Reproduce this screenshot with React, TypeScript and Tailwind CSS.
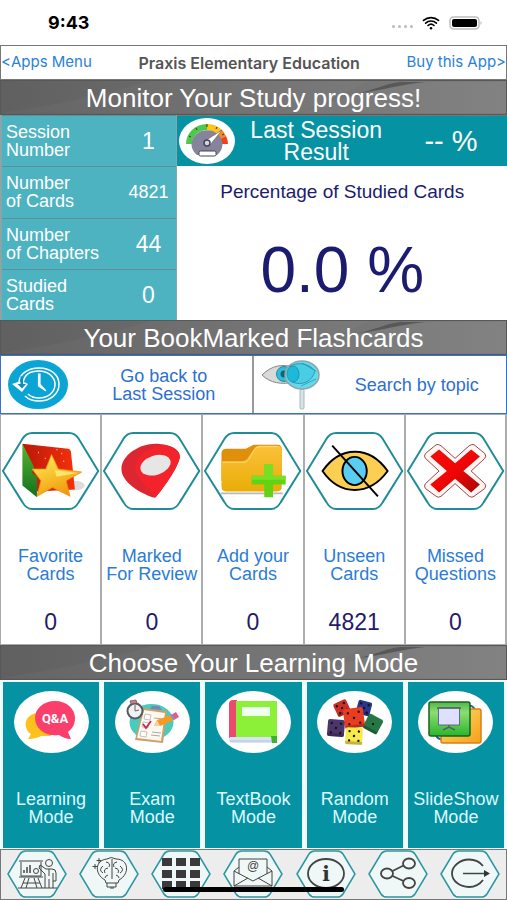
import type { ReactNode } from "react";
import { IoWifi } from "react-icons/io5";

const stats = [
  { label: ["Session", "Number"], value: "1" },
  { label: ["Number", "of Cards"], value: "4821" },
  { label: ["Number", "of Chapters"], value: "44" },
  { label: ["Studied", "Cards"], value: "0" },
];

const SectionTitle = ({ children }: { children: ReactNode }) => (
  <div className="relative flex h-[35px] items-center justify-center border border-[#585858] bg-linear-to-r from-[#606060] via-[#707070] to-[#7d7d7d]">
    {/* brushed light streaks */}
    <svg
      className="absolute inset-0 h-full w-full"
      viewBox="0 0 507 35"
      preserveAspectRatio="none"
      aria-hidden="true"
    >
      <path d="M0 34C50 26 100 16 150 0H370L300 34Z" fill="#fff" opacity=".03" />
      <path d="M300 34C330 24 345 14 425 1H507V34Z" fill="#fff" opacity=".04" />
      <path d="M358 13C380 8 390 1 404 1H426C402 3 384 10 358 13Z" fill="#333" opacity=".45" />
    </svg>
    <h2 className="relative text-[26px] leading-8 text-white">{children}</h2>
  </div>
);

/* ---------- icons ---------- */

const GaugeIcon = () => (
  <svg className="h-[46px] w-14 shrink-0" viewBox="0 0 56 46" aria-hidden="true">
    <ellipse cx="28" cy="23" rx="28" ry="23" fill="#fff" />
    <path d="M7 26A21 20 0 0 1 28 6V12A15 14 0 0 0 13 26Z" fill="#4cc94c" />
    <path d="M28 6A21 20 0 0 1 42 11L37 16A15 14 0 0 0 28 12Z" fill="#fbc31c" />
    <path d="M42 11A21 20 0 0 1 47 18L41 21L37 16Z" fill="#f58a1f" />
    <path d="M47 18A21 20 0 0 1 49 26H43L41 21Z" fill="#f0421c" />
    <path d="M10 18l2 1M17 10l1 2M28 6v3M38 9l-1 2M45 16l-2 1" stroke="#333" />
    <path d="M18 37A15.500 14 0 1 1 38 37Z" fill="#85849a" />
    <path d="M26 23L43 12L31 27Z" fill="#fff" stroke="#55546a" strokeWidth=".5" />
    <circle cx="28" cy="25" r="3" fill="#d6d6df" stroke="#45445a" strokeWidth="1.500" />
    <rect x="20" y="33" width="17" height="5" rx="1.500" fill="#fff" stroke="#45445a" />
  </svg>
);

const HistoryIcon = () => (
  <svg className="h-[49px] w-[60px] shrink-0" viewBox="0 0 60 49" aria-hidden="true">
    <ellipse cx="30" cy="24.500" rx="30" ry="24.500" fill="#0ba5d5" />
    <path d="M11 23C11 14 20 8 31 8C43 8 51 15 51 24.500C51 34 42 41 31 41C25 41 20 39 17 36" fill="none" stroke="#fff" strokeWidth="1.500" />
    <path d="M15 23C16 15 22 11 31 11C40 11 47 17 47 24.500C47 32 40 38 31 38C27 38 23 37 20 34" fill="none" stroke="#fff" strokeWidth="1.500" />
    <path d="M4 24L10 22H16L20 24L14 32Z" fill="#fff" />
    <path d="M12.500 16L15 17V24H18L14 28.500L9.500 24H12.500Z" fill="#0b8fbb" />
    <path d="M30.500 14V26L38 31L32 24.500V14Z" fill="#fff" stroke="#fff" strokeWidth="1.200" />
  </svg>
);

const EyeSearchIcon = () => (
  <svg className="h-[50px] w-[58px] shrink-0" viewBox="0 0 58 50" aria-hidden="true">
    <path d="M0 15C10 5 20 4 32 7V22C20 25 8 23 0 15Z" fill="#d9d9d9" stroke="#858585" />
    <circle cx="22" cy="14" r="7.500" fill="#28c0dc" stroke="#2389a3" />
    <circle cx="22" cy="14" r="3.500" fill="#166276" />
    <rect x="38" y="29" width="4" height="20" rx="1.500" fill="#d7e4e5" stroke="#a5b9ba" />
    <ellipse cx="40" cy="15" rx="17" ry="14" fill="#64d8ea" stroke="#8fa5a8" strokeWidth="1.500" />
    <path d="M27 7C34 2 46 2 53 11C50 22 40 26 30 22C39 20 39 10 29 7" fill="#47cee4" stroke="#238fa3" strokeWidth=".8" />
    <ellipse cx="31" cy="14" rx="6" ry="8" fill="#1cb9da" stroke="#238fa3" strokeWidth=".8" />
    <path d="M40 3L54 11M39 26L54 19" stroke="#238fa3" strokeWidth=".7" />
  </svg>
);

const FavoriteArt = () => (
  <>
    <defs>
      <linearGradient id="star" x1="0" y1="0" x2=".5" y2="1">
        <stop stopColor="#fff35c" />
        <stop offset="1" stopColor="#f29a0c" />
      </linearGradient>
      <linearGradient id="book" x1="0" y1="0" x2="1" y2="0">
        <stop stopColor="#b91808" />
        <stop offset="1" stopColor="#f5300c" />
      </linearGradient>
      <linearGradient id="leaf" x1="0" y1="0" x2="0" y2="1">
        <stop stopColor="#58b432" />
        <stop offset="1" stopColor="#11701c" />
      </linearGradient>
    </defs>
    <ellipse cx="76" cy="55" rx="10" ry="5" fill="#dcdcdc" />
    <path d="M22 12L69 17Q72 18 72 21L76 59L37 61Z" fill="url(#book)" />
    <path d="M22 12L34 36L32 42L37 46V67L22 55Z" fill="url(#leaf)" />
    <path d="M52 23L59 38L83 41L67 50L71 66L53 57L37 66L41 50L32 38L46 38Z" fill="url(#star)" stroke="#e99212" strokeWidth=".8" />
    <path d="M52 25L55 39L79 42L57 46Z" fill="#fff58a" opacity=".7" />
    <path d="M38 21h1M45 27h1M62 22h1M64 30h1M57 18h1" stroke="#ffb49a" strokeWidth="1.500" />
  </>
);

const MarkerArt = () => (
  <>
    <path d="M20 38C20 24 38 12 55 12C66 12 80 16 80 25C80 33 66 54 56 66Q55 68 52 67C40 63 20 52 20 38Z" fill="#dc2733" />
    <path d="M35 41C31 30 42 17 63 13C73 15 80 19 80 25C80 33 66 54 56 66Q55 68 54 67C49 58 38 50 35 41Z" fill="#f3222b" />
    <ellipse cx="55" cy="34" rx="16" ry="10" transform="rotate(-18 55 34)" fill="#e6e6e6" />
  </>
);

const FolderArt = () => (
  <>
    <defs>
      <linearGradient id="folder" x1="0" y1="0" x2="0" y2="1">
        <stop stopColor="#fbc13a" />
        <stop offset="1" stopColor="#e9ad08" />
      </linearGradient>
    </defs>
    <path d="M18 63H82" stroke="#b9b9b9" strokeWidth="2" />
    <path d="M19 22Q19 17 24 17H44L52 13H77Q81 13 81 18V50H19Z" fill="#e08f0a" />
    <path d="M19 30H41Q44 30 46 27L52 18Q54 14 58 14H77Q81 14 81 18V56Q81 61 76 61H24Q19 61 19 56Z" fill="url(#folder)" />
    <path d="M20 31H42Q45 31 47 28L53 18Q55 15 58 15H77" fill="none" stroke="#ffd978" />
    <path d="M63 33h9v12h13v9h-13v13h-9v-13h-13v-9h13z" fill="#61d313" />
    <path d="M63 33h9v12h13v4h-35v-4h13z" fill="#83e42c" opacity=".7" />
  </>
);

const UnseenArt = () => (
  <>
    <path d="M18 40C36 14 66 13 85 40C66 66 36 66 18 40Z" fill="#fccf52" stroke="#000" strokeWidth="2" strokeLinejoin="round" />
    <ellipse cx="51" cy="40" rx="12.500" ry="14.500" fill="#59cdf2" stroke="#000" strokeWidth="2" />
    <path d="M28 14L75 66" stroke="#000" strokeWidth="2" />
  </>
);

const MissedArt = () => (
  <>
    <defs>
      <linearGradient id="cross" x1="0" y1="0" x2="1" y2="1">
        <stop stopColor="#f20d0d" />
        <stop offset=".5" stopColor="#f00606" />
        <stop offset="1" stopColor="#a80707" />
      </linearGradient>
    </defs>
    <path d="M31 13Q33 12 36 14L50.500 27L65 14Q68 12 70 13L81 22Q83 25 81 27L67 40L81 53Q83 55 81 58L70 66Q68 68 65 66L50.500 53L36 66Q33 68 31 66L20 58Q18 55 20 53L34 40L20 27Q18 25 20 22Z" fill="#fff6f3" stroke="#964242" />
    <path d="M34 18L50.500 32L67 18L76 25L59 40L76 54L67 62L50.500 48L34 62L25 54L42 40L25 25Z" fill="url(#cross)" />
  </>
);

const QaArt = () => (
  <>
    <path d="M29 22C17 20 10 28 12 36C13 40 15 42 17 43L14 48C19 48 24 47 27 45H37Z" fill="#fcc11c" />
    <path d="M41 10C53 10 61 18 61 27C61 34 58 38 54 41L57 48C52 48 48 46 45 44C32 46 21 38 21 27C21 18 29 10 41 10Z" fill="#fb3f6c" />
    <text x="41" y="32" textAnchor="middle" fill="#fff" className="font-[Roboto] text-[13px] font-bold">
      Q&amp;A
    </text>
  </>
);

const ExamArt = () => (
  <>
    <ellipse cx="36.500" cy="31" rx="22" ry="18" fill="#4bcbbb" />
    <path d="M28 17L52 20L48 52L20 49Z" fill="#c8a06a" />
    <path d="M29 19L50 22L46 50L22 47Z" fill="#fff8ee" />
    <path d="M35 18l2-3h7l3 4z" fill="#7686ba" />
    <path d="M30 23l6 1-1 5-6-1zM26 40l6 1-1 5-6-1zM28 31l6 1-1 5-6-1z" fill="#fff" stroke="#b3b3b3" strokeWidth=".8" />
    <path d="M28 33l3 4 5-7" fill="none" stroke="#cf2456" strokeWidth="1.800" />
    <path d="M37 41l9 1M36 44l9 1M39 27l8 1" stroke="#aaa" />
    <path d="M39 35l3-6 14-5 3 5-14 6z" fill="#f79a20" />
    <path d="M39 35l3-6 3 6z" fill="#f4d2a5" />
    <path d="M56 24l5-3 3 5-5 3z" fill="#e35c8b" />
    <path d="M55 24l2-1 3 5-2 1z" fill="#8a8fc4" />
    <circle cx="20" cy="20" r="7.500" fill="#f1f1f1" stroke="#555962" strokeWidth="2" />
    <path d="M20 14v6l4-1" fill="none" stroke="#666" />
    <path d="M15 10l6-1 1 3-6 1z" fill="#c7818d" stroke="#77575d" strokeWidth=".8" />
  </>
);

const BookArt = () => (
  <>
    <path d="M13 13Q13 9 17 9H21V47H13Z" fill="#ed496c" />
    <path d="M20 10H61V46H20Z" fill="#8bf037" />
    <path d="M26 16H54V25H26Z" fill="#effff0" />
    <path d="M14 46H57V52H16Q13 52 13 49Z" fill="#d9e4f3" />
    <path d="M14 50H57" stroke="#abc2e2" />
    <path d="M55 45H61V52H56Z" fill="#3eb22f" />
  </>
);

type DieProps = { x: number; y: number; size: number; turn: number; color: string; dot?: string; single?: boolean };

const Die = ({ x, y, size, turn, color, dot = "#1a1111", single }: DieProps) => {
  const h = size / 2;
  return (
    <g transform={`translate(${x} ${y}) rotate(${turn})`}>
      <rect x={-h} y={-h} width={size} height={size} rx="2" fill={color} />
      <path d={`M${-h} ${h - 3}H${h}V${h}H${-h}Z`} fill="#000" opacity=".22" />
      <circle r="1.200" fill={dot} />
      {!single &&
        [-1, 1].map((a) =>
          [-1, 1].map((b) => <circle key={`${a}${b}`} cx={a * h * 0.55} cy={b * h * 0.55} r="1.200" fill={dot} />)
        )}
    </g>
  );
};

const DiceArt = () => (
  <>
    <Die x={25} y={17} size={14} turn={-25} color="#cb3028" />
    <Die x={47} y={17} size={14} turn={15} color="#28378e" />
    <Die x={56} y={33} size={16} turn={28} color="#257746" single />
    <Die x={19} y={37} size={17} turn={5} color="#4b356d" />
    <Die x={37} y={27} size={20} turn={-8} color="#e83d20" />
    <Die x={37} y={45} size={17} turn={3} color="#f8e94d" />
  </>
);

const SlidesArt = () => (
  <>
    <defs>
      <linearGradient id="slideGreen" x1="0" y1="0" x2="0" y2="1">
        <stop stopColor="#4fb648" />
        <stop offset=".3" stopColor="#8ade70" />
        <stop offset="1" stopColor="#2cb52b" />
      </linearGradient>
      <linearGradient id="slideOrange" x1="0" y1="0" x2="1" y2="1">
        <stop stopColor="#ffe06a" />
        <stop offset="1" stopColor="#f5a01b" />
      </linearGradient>
    </defs>
    <path d="M50 15q6-1 7 5M18 43q1 6 7 5" fill="none" stroke="#315b94" strokeWidth="2" />
    <rect x="23" y="18" width="40" height="34" rx="2" fill="url(#slideOrange)" stroke="#dc7e19" strokeWidth="1.500" />
    <rect x="11" y="11" width="41" height="34" rx="2" fill="url(#slideGreen)" stroke="#15631e" strokeWidth="1.500" />
    <rect x="20.500" y="17" width="21" height="17" fill="#dfe0ff" stroke="#65659c" />
    <path d="M19 17H43M31 34V37M25 39L31 36L37 39" fill="none" stroke="#4f6560" strokeWidth="1.500" />
  </>
);

const PresenterArt = () => (
  <>
    <path d="M12 11H36M14 12V26H34V12M12 27H36M18 28L14 38M22 28L19 38M27 28L30 38M31 28L35 38M16 33H33" />
    <path d="M17 23V20M20 23V17M23 23V15" strokeWidth="1.500" />
    <circle cx="29" cy="21" r="2.500" />
    <circle cx="42" cy="13" r="3.500" />
    <path d="M38 38V24L32 18L33 15L39 19H45Q49 19 49 23V31H46V38M42 38V29M46 31V23M42 19V26M11 38H50" />
  </>
);

const BrainArt = () => (
  <>
    <path d="M27 33L26 30C15 24 16 10 28 9Q32 6 37 9C50 9 51 24 40 30L39 33Z" />
    <path d="M28 33v4h9v-4M31 38h4M33 9V29M27 12q5 1 3 5M24 16q-5 4 0 7M29 18q-5 1-3 5M29 25q-3 1-3 3M38 12q-5 1-3 5M41 16q5 4 0 7M36 18q5 1 3 5M37 25q3 1 3 3" />
    <path d="M20 8v5M17.500 10.500h5M16 14v5M13.500 16.500h5" />
  </>
);

const GridArt = () => (
  <g fill="#3a3a3c" stroke="none">
    {[8, 20, 31].map((y) => [11, 25, 39].map((x) => <rect key={`${x}-${y}`} x={x} y={y} width="10" height="8" />))}
  </g>
);

const MailArt = () => (
  <>
    <path d="M16 24V9H44V24M11 21V36H49V21L30 31ZM11 21L16 17M49 21L44 17M11 36L25 28M49 36L35 28" />
    <text x="30" y="20" textAnchor="middle" fill="#444" stroke="none" className="text-[12px]">
      @
    </text>
  </>
);

const InfoArt = () => (
  <>
    <ellipse cx="30" cy="23.500" rx="18" ry="14.500" strokeWidth="1.800" />
    <text x="30" y="31" textAnchor="middle" fill="#333" stroke="none" className="font-['DejaVu_Serif'] text-[20px] font-bold">
      i
    </text>
  </>
);

const ShareArt = () => (
  <g strokeWidth="1.800">
    <ellipse cx="19" cy="23.500" rx="6" ry="5" />
    <ellipse cx="41" cy="13.500" rx="6" ry="5" />
    <ellipse cx="41" cy="33" rx="6" ry="5" />
    <path d="M24.500 21L35.500 15.500M24.500 26L35.500 31" />
  </g>
);

const ExitArt = () => (
  <>
    <path d="M43 16C40 12 35 9.500 29 9.500C20 9.500 12 16 12 23.500S20 37 29 37C35 37 40 34 43 30" strokeWidth="1.800" />
    <path d="M23 23.500H45" strokeWidth="1.500" />
    <path d="M44 20L50 23.500L44 27Z" fill="#333" stroke="none" />
  </>
);

/* ---------- data ---------- */

const bookmarks = [
  { label: ["Favorite", "Cards"], count: "0", art: <FavoriteArt /> },
  { label: ["Marked", "For Review"], count: "0", art: <MarkerArt /> },
  { label: ["Add your", "Cards"], count: "0", art: <FolderArt /> },
  { label: ["Unseen", "Cards"], count: "4821", art: <UnseenArt /> },
  { label: ["Missed", "Questions"], count: "0", art: <MissedArt /> },
];

const modes = [
  { label: "Learning", art: <QaArt /> },
  { label: "Exam", art: <ExamArt /> },
  { label: "TextBook", art: <BookArt /> },
  { label: "Random", art: <DiceArt /> },
  { label: "SlideShow", art: <SlidesArt /> },
];

const tools = [
  { name: "Lessons", art: <PresenterArt /> },
  { name: "Ideas", art: <BrainArt /> },
  { name: "All apps", art: <GridArt /> },
  { name: "Contact", art: <MailArt /> },
  { name: "About", art: <InfoArt /> },
  { name: "Share", art: <ShareArt /> },
  { name: "Exit", art: <ExitArt /> },
];

const App = () => {
  return (
    <div className="relative w-full overflow-hidden bg-white font-['Liberation_Sans',Arial,sans-serif]">
      {/* status bar */}
      <div className="flex h-[45px] items-center justify-between pr-6 pl-12">
        <span className="font-[Inter] text-[18px] leading-6 font-bold text-black">9:43</span>
        <div className="flex items-center gap-2">
          <div className="flex gap-[3px] pt-2">
            {[0, 1, 2, 3].map((dot) => (
              <span key={dot} className="size-[3px] rounded-full bg-[#bbb]" />
            ))}
          </div>
          <IoWifi className="h-5 w-5 text-black" />
          <svg className="h-[14px] w-[34px]" viewBox="0 0 34 14" aria-hidden="true">
            <rect x="1" y="1" width="29" height="12" rx="3.500" fill="#fff" stroke="#bdbdbd" strokeWidth="1.500" />
            <rect x="3" y="3" width="25" height="8" rx="2" fill="#000" />
            <path d="M31.500 5Q34 7 31.500 9Z" fill="#bdbdbd" />
          </svg>
        </div>
      </div>

      {/* nav */}
      <nav className="flex h-[35px] items-center justify-between border border-[#777] font-[Inter] text-[15px]">
        <a href="#apps" className="text-[#2a80dd]">
          &lt;Apps Menu
        </a>
        <h1 className="text-[16px] font-semibold text-[#555]">Praxis Elementary Education</h1>
        <a href="#buy" className="text-[#2a80dd]">
          Buy this App&gt;
        </a>
      </nav>

      <SectionTitle>Monitor Your Study progress!</SectionTitle>

      {/* progress */}
      <section className="grid grid-cols-[35%_65%]">
        <dl className="grid grid-rows-4 border-r border-l-2 border-[#8aa5a8] bg-[#4eb3c1] text-white">
          {stats.map((stat, index) => (
            <div
              key={index}
              className="flex items-center justify-between border-t border-[#5e8f96] pl-1 text-[18px] leading-[18px]"
            >
              <dt>
                {stat.label[0]}
                <br />
                {stat.label[1]}
              </dt>
              <dd className={`w-14 text-center ${stat.value.length > 2 ? "text-[18px]" : "text-[23px]"}`}>
                {stat.value}
              </dd>
            </div>
          ))}
        </dl>
        <div className="flex flex-col text-[#1b1c70]">
          <div className="flex items-center border-t border-[#777] bg-[#0592a2] px-[2px] py-[2px] text-white">
            <GaugeIcon />
            <p className="flex-1 text-center text-[23px] leading-[22px]">
              Last Session
              <br />
              Result
            </p>
            <p className="w-[108px] text-center text-[29px] leading-8">-- %</p>
          </div>
          <p className="pt-4 text-center text-[19px] leading-5">Percentage of Studied Cards</p>
          <p className="pt-9 pb-[18px] text-center text-[64px] leading-[64px]">0.0 %</p>
        </div>
      </section>

      <SectionTitle>Your BookMarked Flashcards</SectionTitle>

      <div className="grid grid-cols-2 border border-[#3274cf] text-[18px] leading-[18px] text-[#2c70d1]">
        <button type="button" className="flex items-center border-r-2 border-[#999] py-1 pl-[7px]">
          <HistoryIcon />
          <span className="flex-1 pl-2 text-center">
            Go back to
            <br />
            Last Session
          </span>
        </button>
        <button type="button" className="flex items-center py-[3px] pl-2">
          <EyeSearchIcon />
          <span className="flex-1 pl-2 text-center">Search by topic</span>
        </button>
      </div>

      <div className="grid grid-cols-5 border-t border-l border-[#aaa]">
        {bookmarks.map((item, index) => (
          <button
            type="button"
            key={index}
            className="flex flex-col items-center border-r-2 border-b border-[#adadad] pt-4 pb-2"
          >
            <svg className="h-20 w-full" viewBox="0 0 102 80" aria-hidden="true">
              <path
                d="M2 40L22 7Q26 1 32 1H70Q76 1 80 7L100 40L80 72Q76 79 70 79H32Q26 79 22 72Z"
                fill="none"
                stroke="#1f8c96"
                strokeWidth="2"
              />
              {item.art}
            </svg>
            <span className="pt-9 text-[18px] leading-[18px] whitespace-nowrap text-[#2b7cd6]">
              {item.label[0]}
              <br />
              {item.label[1]}
            </span>
            <span className="pt-[25px] text-[23px] leading-7 text-[#241a6c]">{item.count}</span>
          </button>
        ))}
      </div>

      <SectionTitle>Choose Your Learning Mode</SectionTitle>

      <div className="grid grid-cols-5 gap-[5px] bg-[#f0fbfc] px-[3px] pt-[2px] pb-px">
        {modes.map((mode) => (
          <button
            type="button"
            key={mode.label}
            className="flex flex-col items-center bg-[#0592a2] pt-[9px] pb-[22px] text-[18px] leading-[18px] text-[#dcfaff]"
          >
            <svg className="h-[62px] w-[75px]" viewBox="0 0 75 62" aria-hidden="true">
              <ellipse cx="37.500" cy="31" rx="37.500" ry="31" fill="#fff" />
              {mode.art}
            </svg>
            <span className="pt-[37px]">
              {mode.label}
              <br />
              Mode
            </span>
          </button>
        ))}
      </div>

      {/* bottom toolbar */}
      <footer className="relative grid grid-cols-7 border border-[#777] bg-[#ededed] pb-px">
        {tools.map((tool) => (
          <button type="button" key={tool.name} aria-label={tool.name} className="flex justify-center">
            <svg className="h-12 w-[60px]" viewBox="0 0 60 48" fill="none" stroke="#444" aria-hidden="true">
              <path
                d="M1 24L13 4Q15 1 19 1H41Q45 1 47 4L59 24L47 44Q45 47 41 47H19Q15 47 13 44Z"
                fill="#f0f7f7"
                stroke="#2b97a1"
                strokeWidth="1.500"
              />
              {tool.art}
            </svg>
          </button>
        ))}
        {/* home indicator */}
        <div className="absolute bottom-[7px] left-1/2 h-[5px] w-[36%] -translate-x-1/2 rounded-full bg-black" />
      </footer>
    </div>
  );
};

export default App;
